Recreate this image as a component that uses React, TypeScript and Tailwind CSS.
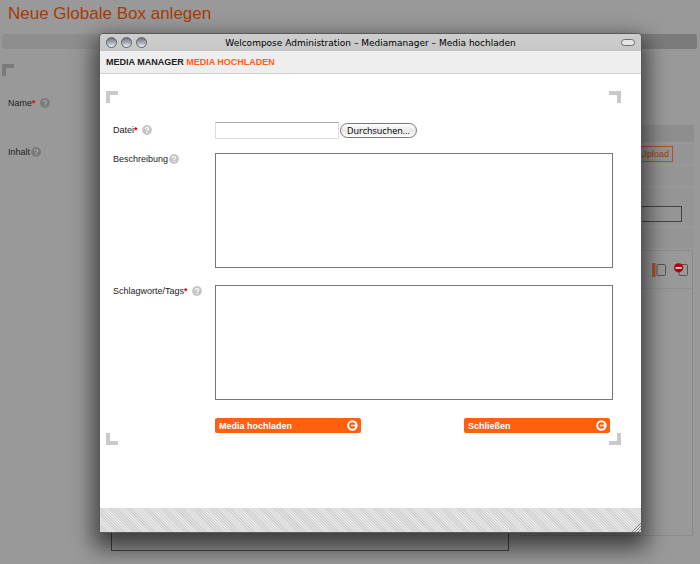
import type { ReactNode } from "react";

function HelpIcon() {
  return (
    <svg viewBox="0 0 10 10" className="size-[10px] shrink-0" role="img" aria-label="Hilfe">
      <circle cx="5" cy="5" r="4.9" fill="currentColor" />
      <path
        d="M3.4 4.1C3.4 3 4.1 2.5 5 2.5s1.6.5 1.6 1.4c0 1-1.5 1-1.5 2.2M5.1 6.8v1.3"
        fill="none"
        className="stroke-(--mark)"
        strokeWidth="1.2"
      />
    </svg>
  );
}

function FieldLabel({ id, text, required }: { id: string; text: string; required?: boolean }) {
  return (
    <div className="flex h-3 items-center">
      <label htmlFor={id} className="text-[9px] leading-3">
        {text}
        {required && <span className="font-bold text-[#e00000]">*</span>}
      </label>
      <span className={required ? "ml-1 flex text-(--icon)" : "ml-px flex text-(--icon)"}>
        <HelpIcon />
      </span>
    </div>
  );
}

function Corner({ className }: { className: string }) {
  return <span className={`block size-3 ${className}`} />;
}

function TrafficButton({ label }: { label: string }) {
  return (
    <button
      type="button"
      aria-label={label}
      className="size-[11px] rounded-full border border-[#5c6068] bg-linear-to-b from-[#70757f] via-[#a5a9b2] to-[#f2f3f6]"
    />
  );
}

function ActionButton({ children }: { children: ReactNode }) {
  return (
    <button
      type="button"
      className="flex h-[15px] w-[146px] items-center justify-between rounded-[2px] bg-[#ff6010] pr-[3px] pl-1 text-[9px] leading-3 font-bold text-white"
    >
      {children}
      <svg viewBox="0 0 11 11" className="size-[11px]" aria-hidden="true">
        <circle cx="5.4" cy="5.5" r="4.2" fill="none" stroke="#fff" strokeWidth="2" />
        <path d="M4 5.5H8.5" fill="none" stroke="#fff" strokeWidth="1.4" />
        <path d="M7.8 3.4 11 5.5 7.8 7.6Z" fill="#fff" />
      </svg>
    </button>
  );
}

function BackgroundPage() {
  return (
    <main className="flex min-h-screen flex-col bg-[#999] pb-[13px] [--icon:#7b7b7b] [--mark:#a5a5a5]">
      <h1 className="h-[34px] pt-1 pl-2 text-[17px] leading-5 text-[#a63c06]">Neue Globale Box anlegen</h1>
      <div className="mr-[3px] ml-[2px] h-[15px] rounded-[3px] bg-linear-to-r from-[#8e8e8e] from-15% to-[#7b7b7b]" />
      <Corner className="mt-[15px] ml-[2px] border-t-4 border-l-4 border-[#7b7b7b]" />
      <div className="flex grow">
        <form className="flex grow flex-col pl-2">
          <div className="mt-[21px] grid grid-cols-[103px_1fr]">
            <FieldLabel id="name" text="Name" required />
            <input id="name" className="h-4 w-[398px] border border-[#555]" />
          </div>
          <div className="mt-[33px] grid grow grid-cols-[103px_1fr]">
            <FieldLabel id="inhalt" text="Inhalt" />
            <textarea
              id="inhalt"
              className="h-full w-[398px] resize-none border border-[#444] bg-[#999] outline-none"
            />
          </div>
        </form>
        <aside className="mt-[49px] mr-[6px] flex w-[174px] shrink-0 flex-col gap-[2px]">
          <div className="h-[17px] bg-[#8e8e8e]" />
          <div className="flex h-5 items-center justify-end bg-[#959595] pr-[21px]">
            <button type="button" className="h-4 border border-[#a9532b] px-[3px] text-[9px] leading-3 text-[#a63c06]">
              Upload
            </button>
          </div>
          <div className="h-5 bg-[#959595]" />
          <div className="flex h-[38px] flex-col items-end bg-[#959595] pt-[18px] pr-3">
            <input aria-label="Suche" className="h-4 w-[150px] border border-[#444]" />
          </div>
          <div className="h-5 bg-[#959595]" />
          <div className="mr-px h-[286px] border border-[#8b8b8b]">
            <div className="flex h-[38px] items-center justify-end gap-2 border-b border-[#909090] pr-1">
              <button type="button" aria-label="Einfügen">
                <svg viewBox="0 0 14 14" className="size-[14px]">
                  <rect x="0" y="0" width="3.5" height="14" fill="#a9572a" />
                  <rect x="5" y="1.5" width="8.5" height="11" rx="1" fill="none" stroke="#555" />
                </svg>
              </button>
              <button type="button" aria-label="Löschen">
                <svg viewBox="0 0 14 14" className="size-[14px]">
                  <rect x="5" y="1.5" width="8.5" height="11" rx="1" fill="none" stroke="#555" />
                  <circle cx="4.6" cy="4.8" r="4.6" fill="#b3000c" />
                  <rect x="1.5" y="4" width="6.2" height="1.8" fill="#ddd" />
                </svg>
              </button>
            </div>
          </div>
        </aside>
      </div>
    </main>
  );
}

function UploadWindow() {
  return (
    <section
      role="dialog"
      aria-labelledby="window-title"
      className="absolute top-[34px] right-[59px] left-[100px] rounded-t-[4px] bg-white shadow-[0_0_0_1px_#5a5a5a,0_10px_22px_6px_rgba(0,0,0,0.6)] [--icon:#c6c6c6] [--mark:#fff]"
    >
      <header className="flex h-[17px] items-center justify-between rounded-t-[4px] bg-linear-to-b from-[#cecece] to-[#c6c6c6] px-[6px]">
        <div className="flex w-12 gap-1">
          <TrafficButton label="Fenster schließen" />
          <TrafficButton label="Minimieren" />
          <TrafficButton label="Zoomen" />
        </div>
        <h2
          id="window-title"
          className="font-['DejaVu_Sans',sans-serif] text-[9px] leading-4 whitespace-nowrap text-black"
        >
          Welcompose Administration – Mediamanager – Media hochladen
        </h2>
        <div className="flex w-12 justify-end">
          <button
            type="button"
            aria-label="Symbolleiste"
            className="h-[7px] w-[14px] rounded-full border border-[#6b6b6b] bg-[#e4e4e4]"
          />
        </div>
      </header>
      <div className="h-[23px] border-b border-[#d0d0d0] bg-[#eee] pl-[6px] text-[9px] leading-[22px] font-bold text-[#222]">
        MEDIA MANAGER <span className="text-[#ff6010]">MEDIA HOCHLADEN</span>
      </div>
      <div className="pt-[17px] pr-5 pb-[63px] pl-[6px]">
        <div className="flex justify-between">
          <Corner className="border-t-4 border-l-4 border-[#c9c9c9]" />
          <Corner className="border-t-4 border-r-4 border-[#c9c9c9]" />
        </div>
        <form className="mt-[19px] mr-2 ml-[7px] grid grid-cols-[102px_1fr] text-[#222]">
          <div className="pt-[2px]">
            <FieldLabel id="datei" text="Datei" required />
          </div>
          <div className="flex h-[31px] items-start gap-px">
            <input
              id="datei"
              className="h-[17px] w-[124px] border border-[#ddd] border-t-[#aaa] bg-white px-1 text-[9px] outline-none"
            />
            <button
              type="button"
              className="mt-px h-[15px] rounded-full border border-[#777] bg-linear-to-b from-white via-[#e8e8e8] to-white px-[6px] font-['Open_Sans','Noto_Sans',sans-serif] text-[9px] leading-3 text-black"
            >
              Durchsuchen...
            </button>
          </div>
          <FieldLabel id="beschreibung" text="Beschreibung" />
          <textarea
            id="beschreibung"
            className="mb-[17px] h-[115px] w-full resize-none border border-[#777] bg-white p-1 text-[9px] outline-none"
          />
          <FieldLabel id="tags" text="Schlagworte/Tags" required />
          <textarea
            id="tags"
            className="mb-[18px] h-[115px] w-full resize-none border border-[#777] bg-white p-1 text-[9px] outline-none"
          />
          <div className="col-start-2 mr-[3px] flex justify-between">
            <ActionButton>Media hochladen</ActionButton>
            <ActionButton>Schließen</ActionButton>
          </div>
        </form>
        <div className="flex justify-between">
          <Corner className="border-b-4 border-l-4 border-[#c9c9c9]" />
          <Corner className="border-r-4 border-b-4 border-[#c9c9c9]" />
        </div>
      </div>
      <footer className="flex h-6 items-end justify-end bg-[repeating-linear-gradient(45deg,#d2d2d2_0_1px,#e6e6e6_1px_2px)]">
        <svg viewBox="0 0 9 9" className="size-[9px]" aria-hidden="true">
          <path d="M0 9 9 0M3 9 9 3M6 9 9 6" stroke="#777" strokeWidth="0.9" />
        </svg>
      </footer>
    </section>
  );
}

export default function App() {
  return (
    <div className="relative min-h-screen overflow-hidden font-['Liberation_Sans',Arial,sans-serif] text-[#222]">
      <BackgroundPage />
      <UploadWindow />
    </div>
  );
}
